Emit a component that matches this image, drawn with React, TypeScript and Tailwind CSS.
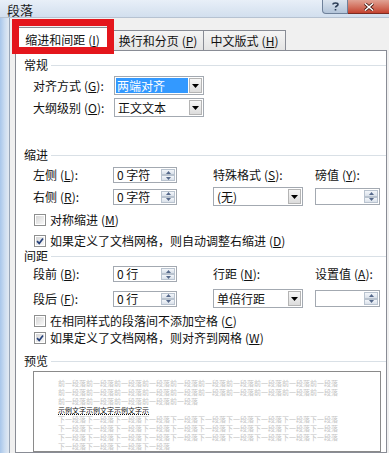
import React from 'react';

const Key = ({ k }: { k: string }) => (
  <span className="ml-[3px]">
    (<span className="underline underline-offset-[1px]">{k}</span>)
  </span>
);

const Tri = ({ up, color = '#000', w = 7, h = 4 }: { up?: boolean; color?: string; w?: number; h?: number }) => (
  <svg width={w} height={h} viewBox={`0 0 ${w} ${h}`}>
    <path d={up ? `M0 ${h}H${w}L${w / 2} 0Z` : `M0 0H${w}L${w / 2} ${h}Z`} fill={color} />
  </svg>
);

const DropBtn = () => (
  <div className="w-[13px] h-full flex items-center justify-center border border-[#b4b4b4] bg-gradient-to-b from-[#f7f7f7] to-[#dcdcdc]">
    <Tri />
  </div>
);

const Combo = ({ text, selected, w }: { text: string; selected?: boolean; w: string }) => (
  <div className={`flex border border-[#a3a9b1] bg-white p-[1px] h-[19px] ${w}`}>
    <div className="flex-1 flex items-center pr-[1px]">
      {selected ? (
        <span className="w-full bg-[#3399ff] text-white leading-[15px] pl-[1px]">{text}</span>
      ) : (
        <span className="pl-[2px] leading-[15px]">{text}</span>
      )}
    </div>
    <DropBtn />
  </div>
);

const SpinHalf = ({ up }: { up?: boolean }) => (
  <div className="flex-1 flex items-center justify-center border border-[#b9c3cf] bg-gradient-to-b from-[#f3f6fa] to-[#dae1ea]">
    <Tri up={up} color="#55688a" w={5} h={3} />
  </div>
);

const Spin = ({ text, w, h }: { text?: string; w: string; h: string }) => (
  <div className={`flex border border-[#a3a9b1] bg-white p-[1px] ${w} ${h}`}>
    <div className="flex-1 flex items-center pl-[2px] leading-none">{text}</div>
    <div className="w-[14px] flex flex-col">
      <SpinHalf up />
      <SpinHalf />
    </div>
  </div>
);

const Group = ({ title, className = '' }: { title: string; className?: string }) => (
  <div className={`flex items-center h-[14px] pl-[8px] ${className}`}>
    <span className="leading-[14px]">{title}</span>
    <div className="flex-1 h-px bg-[#d9e0e6] ml-[3px]" />
  </div>
);

const Check = ({ checked, children, className = '' }: { checked?: boolean; children: React.ReactNode; className?: string }) => (
  <div className={`flex items-center h-[14px] pl-[18px] ${className}`}>
    <div className="w-[12px] h-[12px] border border-[#8e8f8f] bg-white p-[1px]">
      <div className="w-full h-full bg-gradient-to-br from-[#d6d6d6] to-[#f8f8f8] flex items-center justify-center">
        {checked && (
          <svg width="8" height="8" viewBox="0 0 8 8">
            <path d="M1 4.2 L3.2 6.4 L7 1.4" stroke="#25407a" strokeWidth="1.7" fill="none" />
          </svg>
        )}
      </div>
    </div>
    <span className="ml-[4px] leading-[14px]">{children}</span>
  </div>
);

const PREV = '前一段落';
const NEXT = '下一段落';

export default function App() {
  const rep = (s: string, n: number) => Array(n).fill(s).join('');
  return (
    <div className="w-[389px] h-[453px] overflow-hidden flex flex-col bg-[#f0f0f0] text-[12px] text-[#111] font-['Noto_Sans_CJK_SC','Noto_Sans',sans-serif]">
      {/* title bar */}
      <div className="h-[20px] flex bg-gradient-to-b from-[#e8eff8] to-[#d2dfee]">
        <div className="pl-[7px] pt-[2px] text-[13px] leading-[15px] text-[#1a1a1a]">段落</div>
        <div className="flex-1" />
        <div className="w-[26px] h-[14px] flex items-center justify-center border border-t-0 border-[#6f819a] rounded-bl-[4px] bg-gradient-to-b from-[#dce5ef] to-[#b3c4d9]">
          <svg width="7" height="9" viewBox="0 0 7 9">
            <path d="M1 2.5 C1 0.5 6 0.5 6 2.5 C6 4 3.5 4 3.5 5.5 M3.5 7 V8.5" stroke="#2d3e57" strokeWidth="1.6" fill="none" />
          </svg>
        </div>
        <div className="w-[41px] h-[14px] flex items-center justify-center border-b border-[#7a2b22] bg-gradient-to-b from-[#e0a294] to-[#c3412f]">
          <svg width="10" height="8" viewBox="0 0 10 8">
            <path d="M1 0.5 L9 7.5 M9 0.5 L1 7.5" stroke="#3a0e08" strokeWidth="3" />
            <path d="M1 0.5 L9 7.5 M9 0.5 L1 7.5" stroke="#fff" strokeWidth="1.6" />
          </svg>
        </div>
      </div>

      <div className="flex-1 flex border-t border-[#b6c2d1]">
        {/* left frame */}
        <div className="w-[9px] bg-gradient-to-r from-[#a8c6ea] via-[#c9dbf0] to-[#e3eaf2]" />

        {/* client */}
        <div className="flex-1 flex flex-col border-l border-[#98a6b8] pl-[5px] pr-[2px] pt-[8px] relative">
          {/* tabs */}
          <div className="flex items-end h-[24px] -ml-[2px]">
            <div className="relative z-10 w-[99px] h-[24px] -mb-px flex items-center justify-center border border-b-0 border-[#898c95] bg-white">
              <span className="leading-[14px]">缩进和间距<Key k="I" /></span>
            </div>
            <div className="w-[92px] h-[20px] flex items-center justify-center border border-b-0 border-[#898c95] bg-gradient-to-b from-[#f5f5f5] to-[#e4e4e4]">
              <span className="leading-[14px]">换行和分页<Key k="P" /></span>
            </div>
            <div className="w-[82px] h-[20px] flex items-center justify-center border border-b-0 border-l-0 border-[#898c95] bg-gradient-to-b from-[#f5f5f5] to-[#e4e4e4]">
              <span className="leading-[14px]">中文版式<Key k="H" /></span>
            </div>
          </div>

          {/* panel */}
          <div className="flex-1 flex flex-col border border-[#898c95] bg-white">
            <Group title="常规" className="mt-[7px]" />
            <div className="flex items-center mt-[4px] pl-[17px]">
              <span className="w-[81px]">对齐方式<Key k="G" />:</span>
              <Combo text="两端对齐" selected w="w-[90px]" />
            </div>
            <div className="flex items-center mt-[3px] pl-[17px]">
              <span className="w-[81px]">大纲级别<Key k="O" />:</span>
              <Combo text="正文文本" w="w-[90px]" />
            </div>

            <Group title="缩进" className="mt-[31px]" />
            <div className="flex items-center mt-[5px] pl-[17px] h-[16px]">
              <span className="w-[80px]">左侧<Key k="L" />:</span>
              <div className="w-[100px]"><Spin text="0 字符" w="w-[64px]" h="h-[16px]" /></div>
              <span className="w-[102px]">特殊格式<Key k="S" />:</span>
              <span>磅值<Key k="Y" />:</span>
            </div>
            <div className="flex items-center mt-[5px] pl-[17px] h-[17px]">
              <span className="w-[80px]">右侧<Key k="R" />:</span>
              <div className="w-[100px]"><Spin text="0 字符" w="w-[64px]" h="h-[16px]" /></div>
              <div className="w-[102px]"><Combo text="(无)" w="w-[90px]" /></div>
              <Spin w="w-[65px]" h="h-[17px]" />
            </div>
            <Check className="mt-[8px]">对称缩进<Key k="M" /></Check>
            <Check checked className="mt-[7px]">如果定义了文档网格，则自动调整右缩进<Key k="D" /></Check>

            <Group title="间距" className="mt-[1px]" />
            <div className="flex items-center mt-[3px] pl-[17px] h-[16px]">
              <span className="w-[80px]">段前<Key k="B" />:</span>
              <div className="w-[100px]"><Spin text="0 行" w="w-[64px]" h="h-[16px]" /></div>
              <span className="w-[102px]">行距<Key k="N" />:</span>
              <span>设置值<Key k="A" />:</span>
            </div>
            <div className="flex items-center mt-[8px] pl-[17px] h-[17px]">
              <span className="w-[80px]">段后<Key k="F" />:</span>
              <div className="w-[100px]"><Spin text="0 行" w="w-[64px]" h="h-[16px]" /></div>
              <div className="w-[102px]"><Combo text="单倍行距" w="w-[90px]" /></div>
              <Spin w="w-[65px]" h="h-[17px]" />
            </div>
            <Check className="mt-[7px]">在相同样式的段落间不添加空格<Key k="C" /></Check>
            <Check checked className="mt-[3px]">如果定义了文档网格，则对齐到网格<Key k="W" /></Check>

            <Group title="预览" className="mt-[9px]" />
            <div className="mt-[3px] ml-[17px] mr-[5px] flex-1 border border-[#8a8a8a] bg-white pl-[24px] pt-[7px] text-[7px] leading-[9px] text-[#c4c4c4] whitespace-nowrap">
              <div>{rep(PREV, 10)}</div>
              <div>{rep(PREV, 10)}</div>
              <div>{rep(PREV, 5)}</div>
              <div className="text-[#111] underline decoration-dotted">{'示例文字示例文字示例文字示'}</div>
              <div>{rep(NEXT, 10)}</div>
              <div>{rep(NEXT, 10)}</div>
              <div>{rep(NEXT, 10)}</div>
              <div>{rep(NEXT, 4)}</div>
            </div>
          </div>

          {/* red highlight annotation */}
          <div className="absolute left-[2px] top-px w-[102px] h-[35px] border-[7px] border-[#e4161c] z-20" />
        </div>
      </div>
    </div>
  );
}
